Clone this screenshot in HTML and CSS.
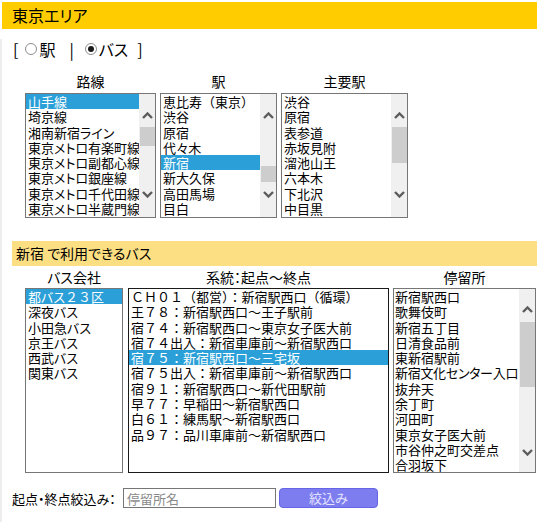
FILE: index.html
```html
<!DOCTYPE html>
<html lang="ja">
<head>
<meta charset="utf-8">
<title>東京エリア</title>
<link rel="stylesheet" href="styles.css">
</head>
<body>
<div class="page">
  <h1 class="header">東京エリア</h1>
  <div class="content">
    <div class="mode">
      <span class="br">[</span>
      <label class="opt"><input type="radio" name="mode" class="radio">駅</label>
      <span class="sep">|</span>
      <label class="opt"><input type="radio" name="mode" class="radio" checked>バス</label>
      <span class="br end">]</span>
    </div>

    <div class="cols top">
      <div class="col w1">
        <div class="lbl">路線</div>
        <div class="box h1">
          <ul class="list">
            <li class="sel">山手線</li>
            <li>埼京線</li>
            <li>湘南新宿ライン</li>
            <li>東京メトロ有楽町線</li>
            <li>東京メトロ副都心線</li>
            <li>東京メトロ銀座線</li>
            <li>東京メトロ千代田線</li>
            <li>東京メトロ半蔵門線</li>
          </ul>
          <div class="sb">
            <svg class="chev" viewBox="0 0 11 7"><polyline points="1,6 5.5,1.5 10,6"/></svg>
            <div class="thumb" style="margin-top:8px;height:19px"></div>
            <svg class="chev dn" viewBox="0 0 11 7"><polyline points="1,1 5.5,5.5 10,1"/></svg>
          </div>
        </div>
      </div>
      <div class="col w2">
        <div class="lbl">駅</div>
        <div class="box h1">
          <ul class="list">
            <li class="np">恵比寿（東京）</li>
            <li>渋谷</li>
            <li>原宿</li>
            <li>代々木</li>
            <li class="sel">新宿</li>
            <li>新大久保</li>
            <li>高田馬場</li>
            <li>目白</li>
          </ul>
          <div class="sb">
            <svg class="chev" viewBox="0 0 11 7"><polyline points="1,6 5.5,1.5 10,6"/></svg>
            <div class="thumb" style="margin-top:47px;height:16px"></div>
            <svg class="chev dn" viewBox="0 0 11 7"><polyline points="1,1 5.5,5.5 10,1"/></svg>
          </div>
        </div>
      </div>
      <div class="col w3">
        <div class="lbl">主要駅</div>
        <div class="box h1">
          <ul class="list">
            <li>渋谷</li>
            <li>原宿</li>
            <li>表参道</li>
            <li>赤坂見附</li>
            <li>溜池山王</li>
            <li>六本木</li>
            <li>下北沢</li>
            <li>中目黒</li>
          </ul>
          <div class="sb">
            <svg class="chev" viewBox="0 0 11 7"><polyline points="1,6 5.5,1.5 10,6"/></svg>
            <div class="thumb" style="margin-top:8px;height:36px"></div>
            <svg class="chev dn" viewBox="0 0 11 7"><polyline points="1,1 5.5,5.5 10,1"/></svg>
          </div>
        </div>
      </div>
    </div>

    <h2 class="bar">新宿 で利用できるバス</h2>

    <div class="cols bus">
      <div class="col b1">
        <div class="lbl">バス会社</div>
        <div class="box h2">
          <ul class="list">
            <li class="sel">都バス<span class="np">２３</span>区</li>
            <li>深夜バス</li>
            <li>小田急バス</li>
            <li>京王バス</li>
            <li>西武バス</li>
            <li>関東バス</li>
          </ul>
        </div>
      </div>
      <div class="col b2">
        <div class="lbl">系統：起点～終点</div>
        <div class="box h2 dark">
          <ul class="list route">
            <li>ＣＨ０１（都営）：新宿駅西口（循環）</li>
            <li>王７８：新宿駅西口～王子駅前</li>
            <li>宿７４：新宿駅西口～東京女子医大前</li>
            <li>宿７４出入：新宿車庫前～新宿駅西口</li>
            <li class="sel">宿７５：新宿駅西口～三宅坂</li>
            <li>宿７５出入：新宿車庫前～新宿駅西口</li>
            <li>宿９１：新宿駅西口～新代田駅前</li>
            <li>早７７：早稲田～新宿駅西口</li>
            <li>白６１：練馬駅～新宿駅西口</li>
            <li>品９７：品川車庫前～新宿駅西口</li>
          </ul>
        </div>
      </div>
      <div class="col b3">
        <div class="lbl">停留所</div>
        <div class="box h2">
          <ul class="list stops">
            <li>新宿駅西口</li>
            <li>歌舞伎町</li>
            <li>新宿五丁目</li>
            <li>日清食品前</li>
            <li>東新宿駅前</li>
            <li class="tight">新宿文化センター入口</li>
            <li>抜弁天</li>
            <li>余丁町</li>
            <li>河田町</li>
            <li>東京女子医大前</li>
            <li>市谷仲之町交差点</li>
            <li>合羽坂下</li>
          </ul>
          <div class="sb">
            <svg class="chev up2" viewBox="0 0 11 7"><polyline points="1,6 5.5,1.5 10,6"/></svg>
            <div class="thumb" style="margin-top:9px;height:65px"></div>
            <svg class="chev dn dn2" viewBox="0 0 11 7"><polyline points="1,1 5.5,5.5 10,1"/></svg>
          </div>
        </div>
      </div>
    </div>

    <form class="filter">
      <label class="flbl" for="stop">起点・終点絞込み：</label>
      <input id="stop" class="finput" type="text" placeholder="停留所名">
      <button type="button" class="fbtn">絞込み</button>
    </form>
  </div>
</div>
</body>
</html>
```

FILE: styles.css
```css
* { box-sizing: border-box; }
html, body { margin: 0; padding: 0; background: #fff; }
body {
  font-family: "Noto Sans CJK JP", "Noto Sans", sans-serif;
  color: #000;
  font-feature-settings: "palt";
}
.page { width: 537px; height: 522px; padding-top: 2px; overflow: hidden; }
.header {
  margin: 0 0 0 2px;
  height: 27px;
  line-height: 27px;
  background: #ffcc00;
  font-size: 16px;
  font-weight: normal;
  padding-left: 10px;
}
.content {
  border-left: 2px solid #eeeeee;
  height: 493px;
}
.mode {
  margin-top: 10px;
  height: 20px;
  line-height: 20px;
  font-size: 16px;
  padding-left: 11px;
  display: flex;
  align-items: center;
}
.br { margin: 0 7px 0 0; }
.br.end { margin: 0 0 0 9px; }
.sep { margin: 0 11px 0 14px; color: #000; }
.opt { display: flex; align-items: center; }
.radio {
  appearance: none;
  -webkit-appearance: none;
  width: 12px;
  height: 12px;
  border: 1px solid #8e8e8e;
  border-radius: 50%;
  margin: 0 2px 0 0;
  background: #fff;
  display: grid;
  place-items: center;
}
.radio:checked::after {
  content: "";
  width: 6px;
  height: 6px;
  border-radius: 50%;
  background: #1a1a1a;
}
.cols { display: flex; padding-left: 23px; }
.top { margin-top: 14px; gap: 4px; }
.bus { margin-top: 3px; }
.col { display: flex; flex-direction: column; }
.w1 { width: 131px; }
.w2 { width: 117px; }
.w3 { width: 127px; }
.b1 { width: 98px; margin-right: 5px; }
.b2 { width: 261px; margin-right: 4px; }
.b3 { width: 143px; }
.lbl {
  text-align: center;
  font-size: 14px;
  line-height: 16px;
  height: 16px;
}
.top .lbl { margin-bottom: 4px; }
.bus .lbl { margin-bottom: 3px; }
.box {
  border: 1px solid #767676;
  display: flex;
  overflow: hidden;
  background: #fff;
}
.box.dark { border-color: #1a1a1a; }
.h1 { height: 125px; }
.h2 { height: 185px; }
.list {
  list-style: none;
  margin: 0;
  padding: 0;
  flex: 1;
  min-width: 0;
  font-size: 13px;
  line-height: 15.3px;
}
.list li {
  padding-left: 2px;
  white-space: nowrap;
  height: 15.3px;
}
.np { font-feature-settings: normal; }
.route { font-feature-settings: normal; }
.stops li { padding-left: 1px; }
.stops li.tight { letter-spacing: -0.3px; }
.list li.sel { background: #2a9fd8; color: #fff; }
.sb {
  width: 16px;
  flex: none;
  background: #f0f0f0;
  display: flex;
  flex-direction: column;
  align-items: center;
}
.chev {
  width: 11px;
  height: 7px;
  margin-top: 18px;
  flex: none;
}
.chev polyline { fill: none; stroke: #5c5c5c; stroke-width: 2.4; }
.chev.dn { margin-top: auto; margin-bottom: 19px; }
.chev.up2 { margin-top: 17px; }
.chev.dn2 { margin-bottom: 16px; }
.thumb { width: 15px; background: #cdcdcd; flex: none; }
.bar {
  margin: 23px 0 0 10px;
  height: 25px;
  line-height: 25px;
  background: #fddf83;
  font-size: 14px;
  font-weight: normal;
  padding-left: 4px;
}
.filter {
  margin: 15px 0 0 10px;
  display: flex;
  align-items: center;
  height: 20px;
}
.flbl { font-size: 13px; width: 111px; white-space: nowrap; }
.finput {
  width: 153px;
  height: 20px;
  border: 1px solid #767676;
  padding: 0 3px;
  font-family: inherit;
  font-size: 13px;
  margin: 0;
}
.finput::placeholder { color: #8a8a8a; }
.fbtn {
  margin-left: 3px;
  width: 99px;
  height: 20px;
  border: 1px solid #6565e6;
  border-radius: 4px;
  background: #7d7def;
  color: #e4e4ff;
  font-family: inherit;
  font-size: 13px;
  padding: 0;
  line-height: 18px;
}
```
